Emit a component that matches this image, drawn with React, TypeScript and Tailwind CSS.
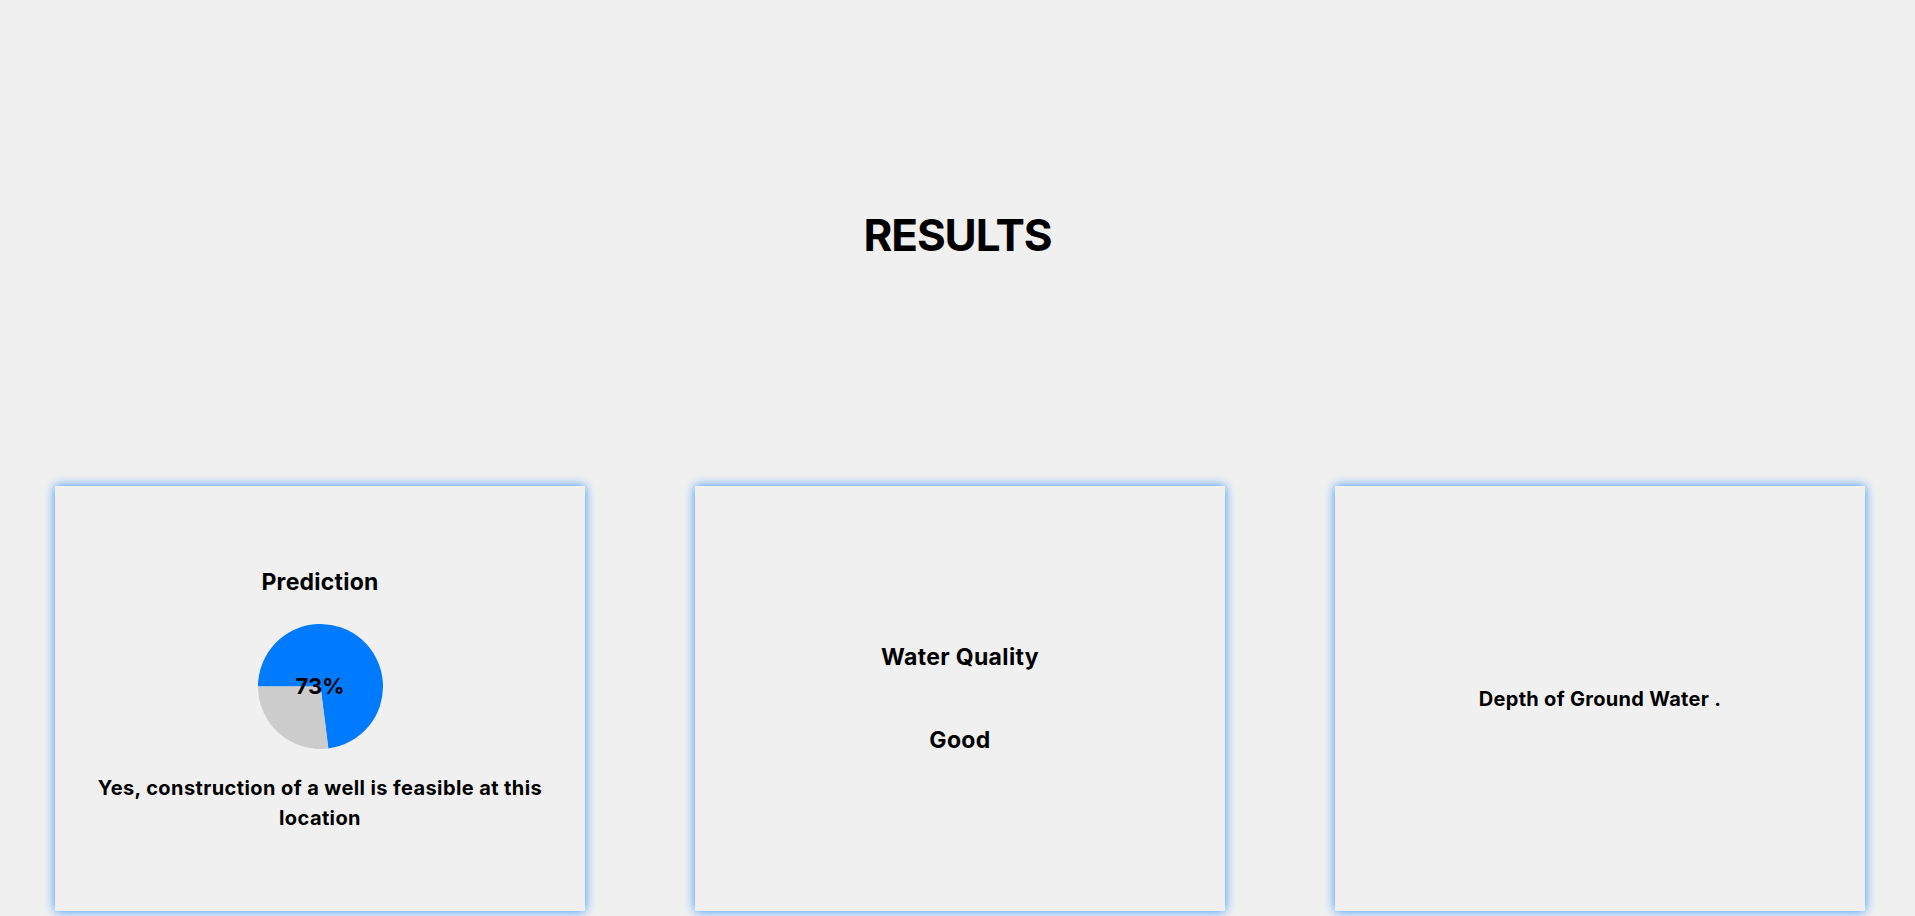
import React from 'react';

const font = { fontFamily: 'Inter, "Noto Sans", sans-serif' };

const PieChart: React.FC<{ percent: number }> = ({ percent }) => {
  const r = 62.5;
  const angle = (percent / 100) * 2 * Math.PI;
  // start at 9 o'clock, go clockwise
  const start = -Math.PI / 2;
  const end = start + angle;
  const ex = r + r * Math.sin(end);
  const ey = r - r * Math.cos(end);
  const large = percent > 50 ? 1 : 0;

  return (
    <div className="relative w-[125px] h-[125px]">
      <svg width="125" height="125" viewBox="0 0 125 125">
        <path d={`M${r} ${r} L0 ${r} A${r} ${r} 0 ${large} 1 ${ex} ${ey} Z`} fill="#007bff" />
        <path d={`M${r} ${r} L${ex} ${ey} A${r} ${r} 0 ${1 - large} 1 0 ${r} Z`} fill="#cccccc" />
      </svg>
      <div className="absolute inset-0 flex items-center justify-center text-[22px] font-bold text-black">
        {percent}%
      </div>
    </div>
  );
};

const Card: React.FC<{ children: React.ReactNode }> = ({ children }) => (
  <div className="w-[530px] h-[425px] shrink-0 bg-[#f0f0f0] shadow-[0_0_10px_rgba(0,123,255,0.8)] flex flex-col items-center justify-center text-center">
    {children}
  </div>
);

const App: React.FC = () => {
  return (
    <div className="min-h-screen bg-[#f0f0f0] text-black" style={font}>
      {/* Header */}
      <section className="pt-[208px] pb-[224px]">
        <h1 className="text-[44px] leading-[54px] font-bold text-center tracking-tight">RESULTS</h1>
      </section>

      {/* Cards */}
      <section className="flex gap-[110px] pl-[55px]">
        <Card>
          <h3 className="text-[23px] leading-[36px] font-bold tracking-[0.01em]">Prediction</h3>
          <div className="mt-[24px] mb-[24px]">
            <PieChart percent={73} />
          </div>
          <p className="w-[480px] text-[20px] leading-[30px] font-bold tracking-[0.02em]">
            Yes, construction of a well is feasible at this location
          </p>
        </Card>

        <Card>
          <h3 className="text-[23px] leading-[36px] font-bold tracking-[0.015em]">Water Quality</h3>
          <h3 className="mt-[47px] text-[23px] leading-[36px] font-bold tracking-[0.015em]">Good</h3>
        </Card>

        <Card>
          <p className="text-[20px] leading-[30px] font-bold tracking-[0.015em]">Depth of Ground Water .</p>
        </Card>
      </section>
    </div>
  );
};

export default App;
